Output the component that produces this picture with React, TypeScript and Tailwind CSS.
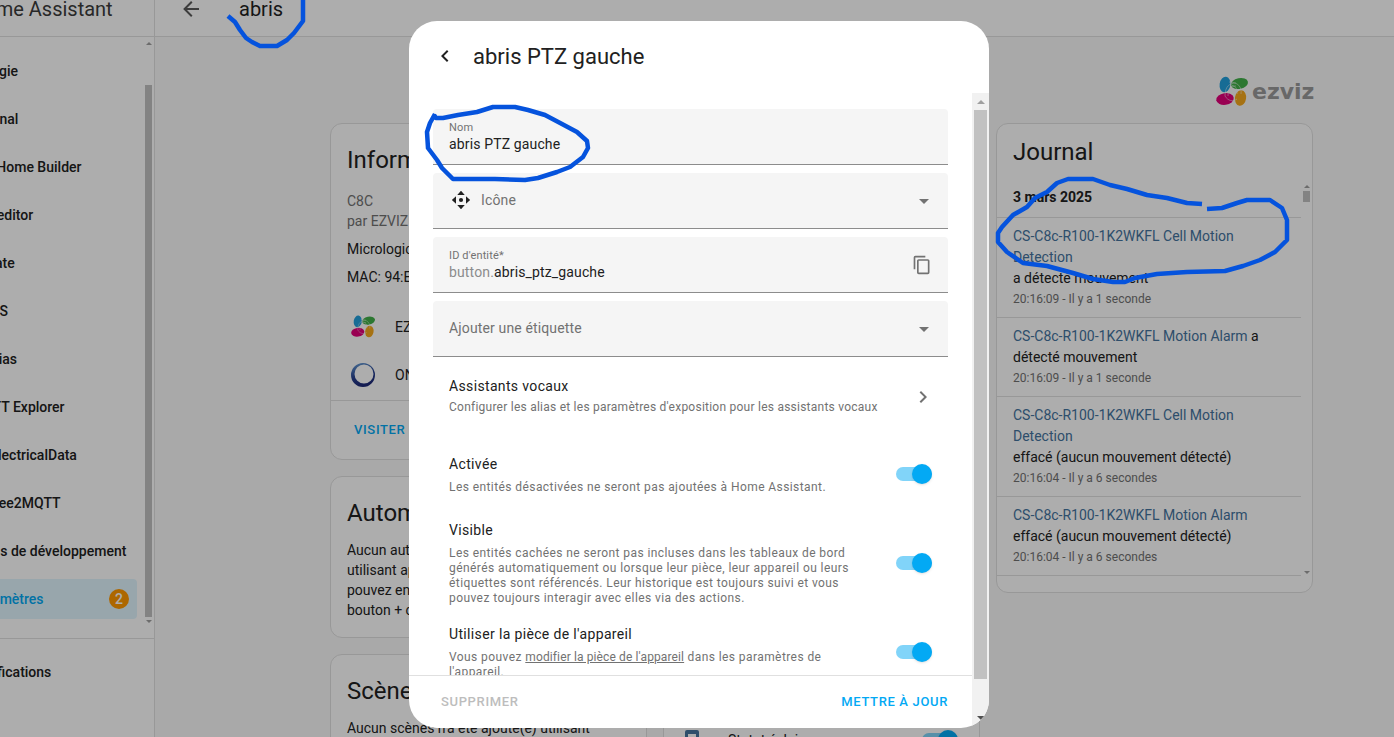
import type { ReactNode } from "react";

const menu = [
  "Énergie",
  "Journal",
  "ESPHome Builder",
  "File editor",
  "Frigate",
  "HACS",
  "Médias",
  "MQTT Explorer",
  "MyElectricalData",
  "Zigbee2MQTT",
  "Outils de développement",
];

const logbook = [
  {
    name: "CS-C8c-R100-1K2WKFL Cell Motion Detection",
    state: "a détecté mouvement",
    time: "20:16:09 - Il y a 1 seconde",
    stacked: true,
  },
  {
    name: "CS-C8c-R100-1K2WKFL Motion Alarm",
    state: "a détecté mouvement",
    time: "20:16:09 - Il y a 1 seconde",
    stacked: false,
  },
  {
    name: "CS-C8c-R100-1K2WKFL Cell Motion Detection",
    state: "effacé (aucun mouvement détecté)",
    time: "20:16:04 - Il y a 6 secondes",
    stacked: true,
  },
  {
    name: "CS-C8c-R100-1K2WKFL Motion Alarm",
    state: "effacé (aucun mouvement détecté)",
    time: "20:16:04 - Il y a 6 secondes",
    stacked: true,
  },
];

const icons = {
  arrowLeft: "M20,11V13H8L13.5,18.5L12.08,19.92L4.16,12L12.08,4.08L13.5,5.5L8,11H20Z",
  chevronLeft: "M15.41,16.58L10.83,12L15.41,7.41L14,6L8,12L14,18L15.41,16.58Z",
  chevronRight: "M8.59,16.58L13.17,12L8.59,7.41L10,6L16,12L10,18L8.59,16.58Z",
  menuDown: "M7,10L12,15L17,10H7Z",
  copy: "M19,21H8V7H19M19,5H8A2,2 0 0,0 6,7V21A2,2 0 0,0 8,23H19A2,2 0 0,0 21,21V7A2,2 0 0,0 19,5M16,1H4A2,2 0 0,0 2,3V17H4V3H16V1Z",
  pan: "M12,1L7.5,6H16.5L12,1M6,7.5L1,12L6,16.5V7.5M18,7.5V16.5L23,12L18,7.5M12,9.5A2.5,2.5 0 0,0 9.5,12A2.5,2.5 0 0,0 12,14.5A2.5,2.5 0 0,0 14.5,12A2.5,2.5 0 0,0 12,9.5M7.5,18L12,23L16.5,18H7.5Z",
  light: "M7,2H17A2,2 0 0,1 19,4V20A2,2 0 0,1 17,22H7A2,2 0 0,1 5,20V4A2,2 0 0,1 7,2M8,6V11H16V6H8Z",
};

function Icon({ path, className }: { path: string; className: string }) {
  return (
    <svg viewBox="0 0 24 24" className={className} fill="currentColor" aria-hidden="true">
      <path d={path} />
    </svg>
  );
}

function Petals() {
  return (
    <g>
      <ellipse cx="9" cy="8.5" rx="5.4" ry="7.8" fill="#229fdc" transform="rotate(8 9 8.5)" />
      <ellipse cx="23.5" cy="7.5" rx="8.6" ry="5.4" fill="#41b049" transform="rotate(-12 23.5 7.5)" />
      <ellipse cx="9" cy="23" rx="8.8" ry="5.8" fill="#e2007a" transform="rotate(-8 9 23)" />
      <ellipse cx="24.5" cy="22" rx="5.6" ry="7.8" fill="#f5a81c" transform="rotate(8 24.5 22)" />
      <g fill="none" stroke="#fafafa" strokeWidth="0.7" opacity="0.7">
        <path d="M9 20C9 10 14 7 20 7" />
        <path d="M12 20C12 13 15 10 20 10" />
        <path d="M13 6C22 6 26 11 25 18" />
        <path d="M14 9C19 9 22 13 21 18" />
        <path d="M9 20C12 25 17 26 21 23" />
      </g>
    </g>
  );
}

function Switch({ label }: { label: string }) {
  return (
    <input
      type="checkbox"
      role="switch"
      aria-label={label}
      defaultChecked
      className="relative h-[14px] w-9 shrink-0 appearance-none rounded-full bg-[#03a9f4]/50 after:absolute after:-top-[3px] after:right-0 after:size-5 after:rounded-full after:bg-[#03a9f4] after:shadow"
    />
  );
}

function Card({ title, children }: { title: string; children: ReactNode }) {
  return (
    <section className="rounded-xl border border-[#e0e0e0] bg-white pt-3">
      <h2 className="px-4 text-2xl leading-[48px] whitespace-nowrap">{title}</h2>
      {children}
    </section>
  );
}

function Field({ children }: { children: ReactNode }) {
  return (
    <div className="flex h-14 items-center rounded-t border-b border-[#8c8c8c] bg-[#f5f5f5] px-4 text-sm tracking-[0.01em]">
      {children}
    </div>
  );
}

function SettingRow({ title, children }: { title: string; children: ReactNode }) {
  return (
    <div className="flex min-h-[74px] items-center px-4 py-[9px]">
      <div className="flex-1 pr-8">
        <h3 className="text-sm leading-5 tracking-wide">{title}</h3>
        <p className="mt-[6px] text-xs leading-[15px] tracking-[0.035em] text-[#727272]">{children}</p>
      </div>
      <Switch label={title} />
    </div>
  );
}

function Sidebar() {
  return (
    <aside className="flex w-64 shrink-0 flex-col border-r border-[#e0e0e0] bg-white text-sm font-medium">
      <div className="flex h-[57px] items-center border-b border-[#e0e0e0] pt-[2px] pl-[71px] text-xl font-normal text-[#3c3c3c]">
        Home Assistant
      </div>
      <div className="flex min-h-0 flex-1">
        <nav className="flex flex-1 flex-col gap-2 pt-[14px] pl-1">
          {menu.map((item) => (
            <a key={item} href="#" className="flex h-10 items-center pl-[68px] whitespace-nowrap">
              {item}
            </a>
          ))}
          <a
            href="#"
            className="flex h-10 items-center justify-between rounded bg-[#03a9f4]/12 pr-2 pl-[68px] text-[#03a9f4]"
          >
            Paramètres
            <span className="flex size-5 items-center justify-center rounded-full bg-[#ff9800] text-white">
              2
            </span>
          </a>
        </nav>
        <div className="ml-2 flex w-[9px] flex-col items-center pt-[5px] pr-[2px] pb-[15px]">
          <span className="border-x-[3px] border-b-[3px] border-x-transparent border-b-[#a0a0a0]" />
          <span className="mt-10 w-[7px] flex-1 bg-[#c1c1c1]" />
          <span className="mt-[3px] border-x-[3px] border-t-[3px] border-x-transparent border-t-[#a0a0a0]" />
        </div>
      </div>
      <div className="h-[131px] border-t border-[#e0e0e0] pt-[13px]">
        <a href="#" className="flex h-10 items-center pl-[72px]">
          Notifications
        </a>
      </div>
    </aside>
  );
}

function DeviceColumn() {
  return (
    <div className="flex flex-col gap-4 text-sm leading-5">
      <Card title="Informations sur l'appareil">
        <div className="px-4 pt-[7px]">
          <p className="text-[#727272]">C8C</p>
          <p className="text-[#727272]">par EZVIZ</p>
          <p className="mt-2">Micrologiciel: V5.3.8</p>
          <p className="mt-2">MAC: 94:EC:13:00:00:00</p>
        </div>
        <div className="mt-4 px-5">
          <a href="#" className="flex h-12 items-center gap-5">
            <svg viewBox="0 0 32 32" className="size-6" aria-hidden="true">
              <Petals />
            </svg>
            EZVIZ
          </a>
          <a href="#" className="flex h-12 items-center gap-5">
            <svg viewBox="0 0 24 24" className="size-6" aria-hidden="true">
              <defs>
                <linearGradient id="ring" x1="0" y1="0" x2="0.3" y2="1">
                  <stop offset="0" stopColor="#6ba4dc" />
                  <stop offset="0.6" stopColor="#27408f" />
                  <stop offset="1" stopColor="#1e2a78" />
                </linearGradient>
              </defs>
              <path
                fill="url(#ring)"
                fillRule="evenodd"
                d="M12,0A12,12 0 1,1 12,24A12,12 0 1,1 12,0M13,1.5A9.5,9.5 0 1,0 13,20.5A9.5,9.5 0 1,0 13,1.5Z"
              />
            </svg>
            ONVIF
          </a>
        </div>
        <div className="mt-px flex h-[59px] items-center border-t border-[#e0e0e0] pl-[23px]">
          <a href="#" className="text-[13px] font-medium tracking-wider text-[#03a9f4]">
            VISITER
          </a>
        </div>
      </Card>
      <Card title="Automatisations">
        <p className="px-4 pt-[3px] pb-[17px] whitespace-nowrap">
          Aucun automatisations n'a été ajouté(e)
          <br />
          utilisant appareil pour le moment. Vous
          <br />
          pouvez en ajouter un en cliquant sur le
          <br />
          bouton + ci-dessus.
        </p>
      </Card>
      <Card title="Scènes">
        <p className="px-4 pt-[3px] pb-[17px] whitespace-nowrap">
          Aucun scènes n'a été ajouté(e) utilisant
          <br />
          appareil pour le moment.
        </p>
      </Card>
    </div>
  );
}

function Logbook() {
  return (
    <section className="self-start rounded-xl border border-[#e0e0e0] bg-white pt-1 pb-4">
      <h2 className="px-4 text-2xl leading-[48px]">Journal</h2>
      <div className="flex">
        <div className="flex-1">
          <h3 className="flex h-[41px] items-center px-4 text-sm font-bold">3 mars 2025</h3>
          {logbook.map((entry, i) => (
            <div
              key={i}
              className="border-t border-[#e0e0e0] px-4 py-2 text-sm leading-[21px] last:border-b"
            >
              <a href="#" className="text-[#44739e]">
                {entry.name}
              </a>{" "}
              {entry.stacked ? <div>{entry.state}</div> : entry.state}
              <div className="text-xs leading-5 text-[#727272]">{entry.time}</div>
            </div>
          ))}
        </div>
        <div className="flex w-[11px] flex-col items-center justify-between pt-[9px]">
          <div className="flex flex-col items-center gap-[3px]">
            <span className="border-x-[3px] border-b-[3px] border-x-transparent border-b-[#a0a0a0]" />
            <span className="h-[11px] w-[7px] bg-[#c1c1c1]" />
          </div>
          <span className="mb-[2px] border-x-[3px] border-t-[3px] border-x-transparent border-t-[#a0a0a0]" />
        </div>
      </div>
    </section>
  );
}

function EntityDialog() {
  return (
    <div
      role="dialog"
      aria-label="abris PTZ gauche"
      className="flex h-full w-full max-w-[580px] flex-col overflow-hidden rounded-[28px] bg-white"
    >
      <header className="flex h-[72px] shrink-0 items-center gap-4 pb-[2px] pl-6">
        <button aria-label="Retour">
          <Icon path={icons.chevronLeft} className="size-6" />
        </button>
        <h1 className="text-[22px]">abris PTZ gauche</h1>
      </header>

      <div className="flex min-h-0 flex-1">
        <div className="flex min-w-0 flex-1 flex-col">
          <div className="min-h-0 flex-1 overflow-hidden px-6 pt-4">
            <div className="flex flex-col gap-2">
              <Field>
                <div className="flex flex-1 flex-col pb-px">
                  <label htmlFor="name" className="text-[11px] leading-4 text-[#727272]">
                    Nom
                  </label>
                  <input id="name" defaultValue="abris PTZ gauche" className="h-4 outline-none" />
                </div>
              </Field>
              <Field>
                <Icon path={icons.pan} className="mr-[10px] mb-[2px] ml-[2px] size-5" />
                <select aria-label="Icône" className="flex-1 appearance-none pb-[2px] text-[#727272]">
                  <option>Icône</option>
                </select>
                <Icon path={icons.menuDown} className="-mr-1 size-6 text-[#727272]" />
              </Field>
              <Field>
                <div className="flex flex-1 flex-col pb-px">
                  <label htmlFor="entity" className="text-[11px] leading-4 text-[#727272]">
                    ID d'entité*
                  </label>
                  <div className="flex">
                    <span className="leading-4 text-[#8c8c8c]">button.</span>
                    <input id="entity" defaultValue="abris_ptz_gauche" className="h-4 flex-1 outline-none" />
                  </div>
                </div>
                <button aria-label="Copier">
                  <Icon path={icons.copy} className="size-5 text-[#727272]" />
                </button>
              </Field>
              <Field>
                <select
                  aria-label="Ajouter une étiquette"
                  className="flex-1 appearance-none pb-[2px] text-[#727272]"
                >
                  <option>Ajouter une étiquette</option>
                </select>
                <Icon path={icons.menuDown} className="-mr-1 size-6 text-[#727272]" />
              </Field>
            </div>

            <button className="my-1 flex h-[72px] w-full items-center justify-between pr-[13px] pb-px pl-4 text-left">
              <span>
                <span className="block text-sm leading-5 tracking-wide">Assistants vocaux</span>
                <span className="block pt-px text-xs leading-5 tracking-[0.02em] text-[#727272]">
                  Configurer les alias et les paramètres d'exposition pour les assistants vocaux
                </span>
              </span>
              <Icon path={icons.chevronRight} className="size-6 text-[#727272]" />
            </button>

            <SettingRow title="Activée">
              Les entités désactivées ne seront pas ajoutées à Home Assistant.
            </SettingRow>
            <SettingRow title="Visible">
              Les entités cachées ne seront pas incluses dans les tableaux de bord générés
              automatiquement ou lorsque leur pièce, leur appareil ou leurs étiquettes sont
              référencés. Leur historique est toujours suivi et vous pouvez toujours interagir avec
              elles via des actions.
            </SettingRow>
            <SettingRow title="Utiliser la pièce de l'appareil">
              Vous pouvez{" "}
              <a href="#" className="tracking-[0.01em] underline">
                modifier la pièce de l'appareil
              </a>{" "}
              dans les paramètres de l'appareil.
            </SettingRow>
          </div>

          <footer className="flex h-[53px] shrink-0 items-center justify-between border-t border-[#e0e0e0] pr-6 pl-8 text-[13px] font-medium">
            <button disabled className="tracking-wider text-[#bdbdbd]">
              SUPPRIMER
            </button>
            <button className="tracking-wider text-[#03a9f4]">METTRE À JOUR</button>
          </footer>
        </div>

        <div className="flex w-[17px] flex-col items-center bg-[#f1f1f1] pt-[7px] pb-2">
          <span className="border-x-4 border-b-4 border-x-transparent border-b-[#a0a0a0]" />
          <span className="mt-[6px] w-[13px] flex-1 bg-[#c1c1c1]" />
          <span className="mt-[37px] border-x-4 border-t-4 border-x-transparent border-t-[#505050]" />
        </div>
      </div>
    </div>
  );
}

// Freehand pen strokes drawn over everything else
function PenMarks() {
  return (
    <svg
      className="pointer-events-none absolute inset-0 h-full w-full"
      fill="none"
      stroke="#0553dd"
      strokeWidth="4.5"
      strokeLinejoin="round"
      aria-hidden="true"
    >
      <path d="M228 16L235 22L240 30L246 38L252 42L260 46L277 46L287 40L294 33L300 25L303 21L303 0" />
      <path d="M434 115L436 118L443 118L458 115L477 112L493 107L515 107L528 110L545 115L562 124L577 132L587 141L588 148L583 157L570 167L557 172L538 178L525 180L495 179L453 179L442 168L437 160L428 148L427 132L430 123L435 114" />
      <path d="M1202 204L1187 203L1167 198L1147 195L1127 189L1110 185L1093 179L1068 179L1057 183L1047 192L1035 198L1027 207L1013 215L1002 227L998 233L998 242L1007 252L1023 263L1047 266L1073 273L1093 279L1113 282L1125 282L1135 278L1157 274L1187 272L1225 271L1243 266L1260 260L1275 252L1287 240L1287 220L1282 208L1270 200L1247 200L1237 203L1222 208L1207 209" />
    </svg>
  );
}

export default function App() {
  return (
    <div className="relative h-screen overflow-hidden font-['Roboto',sans-serif] text-[#212121]">
      <div className="relative -mt-5 -mr-[105px] -ml-[101px] flex h-[calc(100vh+52px)]">
        <Sidebar />

        <main className="flex min-w-0 flex-1 flex-col overflow-hidden bg-[#fafafa]">
          <header className="flex h-[57px] shrink-0 items-center gap-9 border-b border-[#e0e0e0] bg-white pt-px pl-6">
            <button aria-label="Retour" className="text-[#5a5a5a]">
              <Icon path={icons.arrowLeft} className="size-6" />
            </button>
            <h1 className="text-xl">abris</h1>
          </header>

          <div className="mx-auto w-full max-w-[994px] pr-[11px]">
            <div className="-mr-[3px] flex h-[86px] justify-end pt-[39px]">
              <svg viewBox="0 0 100 32" className="h-8 w-[100px] overflow-visible" role="img" aria-label="ezviz">
                <Petals />
                <text
                  x="36"
                  y="23"
                  fontFamily="DejaVu Sans, sans-serif"
                  fontWeight="700"
                  fontSize="22"
                  fill="#9a9a9a"
                >
                  ezviz
                </text>
              </svg>
            </div>
            <div className="grid grid-cols-3 gap-4">
              <DeviceColumn />
              <Card title="Contrôles">
                <div className="flex h-[576px] items-end justify-between pr-[21px] pl-4 text-sm">
                  <span className="flex h-10 items-center gap-6">
                    <Icon path={icons.light} className="size-6 text-[#44739e]" />
                    Statut éclair
                  </span>
                  <span className="flex h-10 items-center">
                    <Switch label="Statut éclair" />
                  </span>
                </div>
              </Card>
              <Logbook />
            </div>
          </div>
        </main>

        <div className="absolute inset-0 flex items-center justify-center bg-black/32 py-[41px]">
          <EntityDialog />
        </div>
      </div>
      <PenMarks />
    </div>
  );
}
